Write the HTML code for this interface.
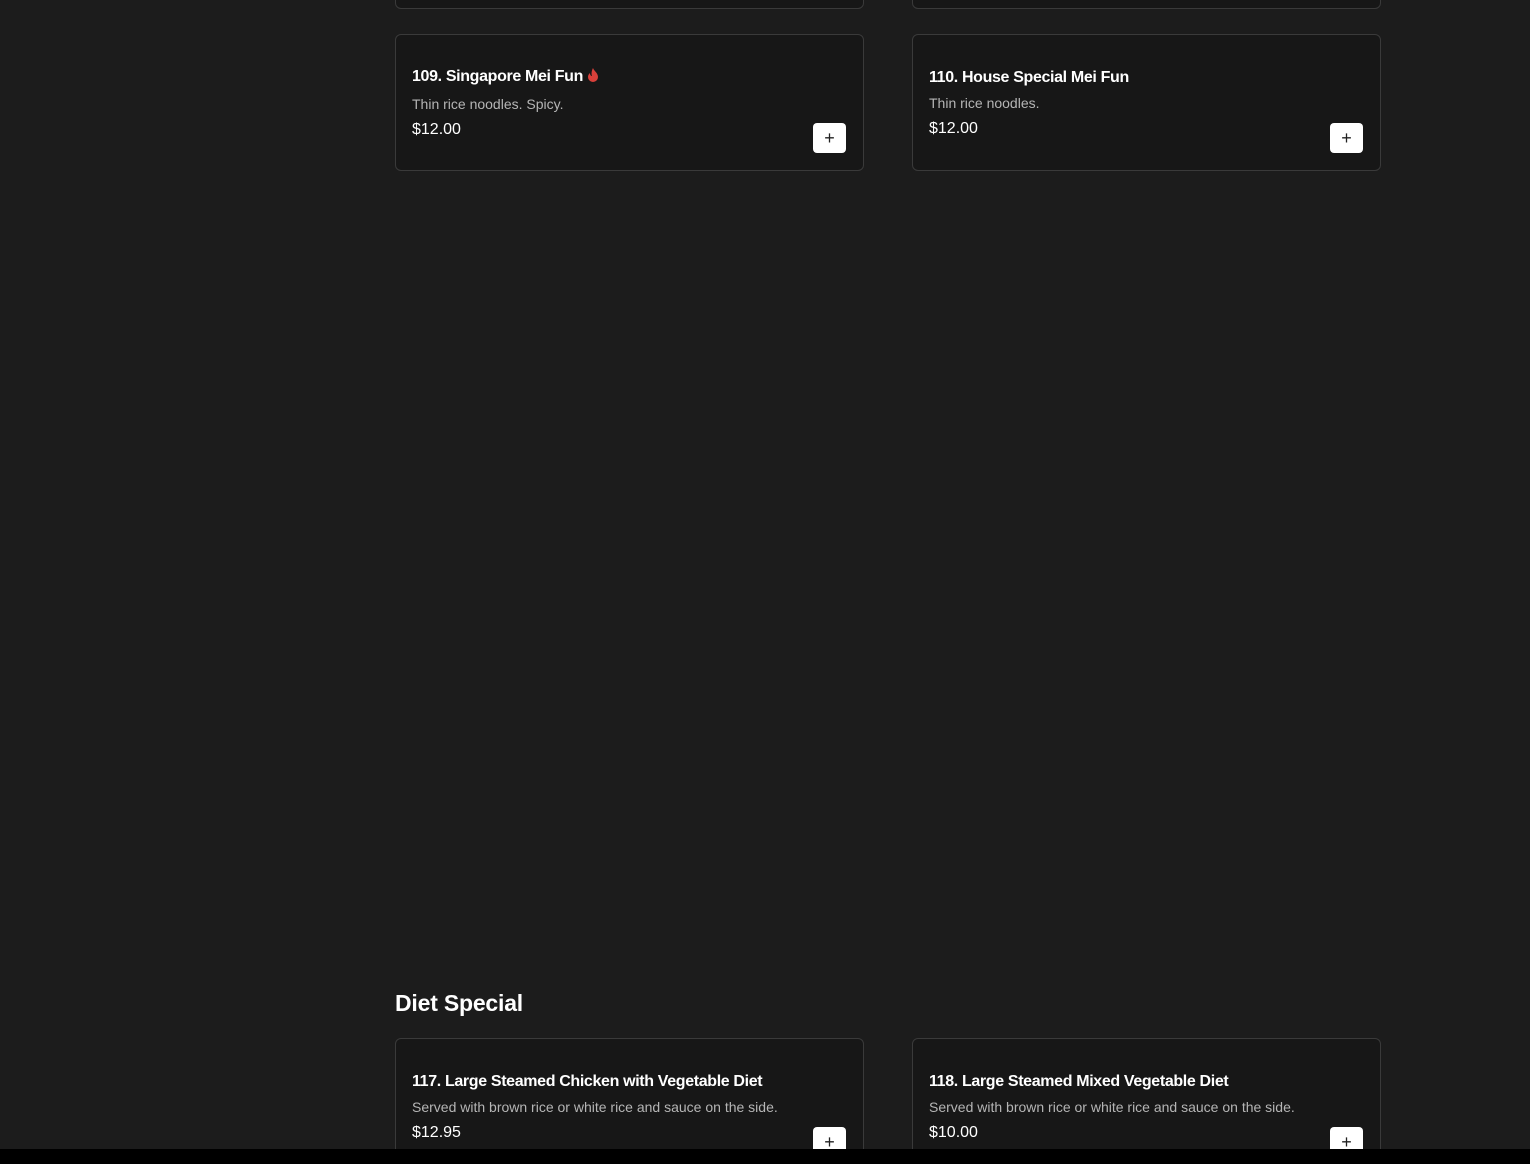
<!DOCTYPE html>
<html style="width:1530px;height:1164px;overflow:hidden"><head><meta charset="utf-8"><style>
*{margin:0;padding:0;box-sizing:border-box}
body{width:1530px;height:1164px;background:#1c1c1c;position:relative;overflow:hidden;font-family:"Liberation Sans",Arial,sans-serif;color:#fff}
.card{position:absolute;width:469px;height:137px;background:#171717;border:1px solid #3a3a3a;border-radius:6px}
.t{position:absolute;left:16px;top:33px;font-size:16px;font-weight:bold;white-space:nowrap;letter-spacing:-0.35px}
.d{position:absolute;left:16px;top:61px;font-size:14px;color:#b5b5b5;white-space:nowrap}
.p{position:absolute;left:16px;top:86px;font-size:16px}
.b{position:absolute;left:417px;top:88px;width:33px;height:30px;background:#fff;border-radius:4px;color:#222;font-size:18px;text-align:center;line-height:30px}
h2{position:absolute;left:395px;top:990px;font-size:23px;font-weight:bold;letter-spacing:-0.2px}
.bar{position:absolute;left:0;top:1149px;width:1530px;height:15px;background:#000}
</style></head><body>
<div class="card" style="left:395px;top:-128px"></div>
<div class="card" style="left:912px;top:-128px"></div>
<div class="card" style="left:395px;top:34px"><div class="t">109. Singapore Mei Fun <svg width="12" height="14" viewBox="0 0 12 14" style="vertical-align:-1px"><path d="M6 0C7 3 11 5 11 9a5 5 0 0 1-10 0c0-2 1-3 2-4 0 2 1 3 2 3C4 5 5 2 6 0z" fill="#d9403a"/></svg></div><div class="d">Thin rice noodles. Spicy.</div><div class="p">$12.00</div><div class="b">+</div></div>
<div class="card" style="left:912px;top:34px"><div class="t" style="top:34px">110. House Special Mei Fun</div><div class="d" style="top:60px">Thin rice noodles.</div><div class="p" style="top:85px">$12.00</div><div class="b">+</div></div>
<h2>Diet Special</h2>
<div class="card" style="left:395px;top:1038px;height:126px"><div class="t" style="top:34px">117. Large Steamed Chicken with Vegetable Diet</div><div class="d" style="top:60px">Served with brown rice or white rice and sauce on the side.</div><div class="p" style="top:85px">$12.95</div><div class="b">+</div></div>
<div class="card" style="left:912px;top:1038px;height:126px"><div class="t" style="top:34px">118. Large Steamed Mixed Vegetable Diet</div><div class="d" style="top:60px">Served with brown rice or white rice and sauce on the side.</div><div class="p" style="top:85px">$10.00</div><div class="b">+</div></div>
<div class="bar"></div>
</body></html>
